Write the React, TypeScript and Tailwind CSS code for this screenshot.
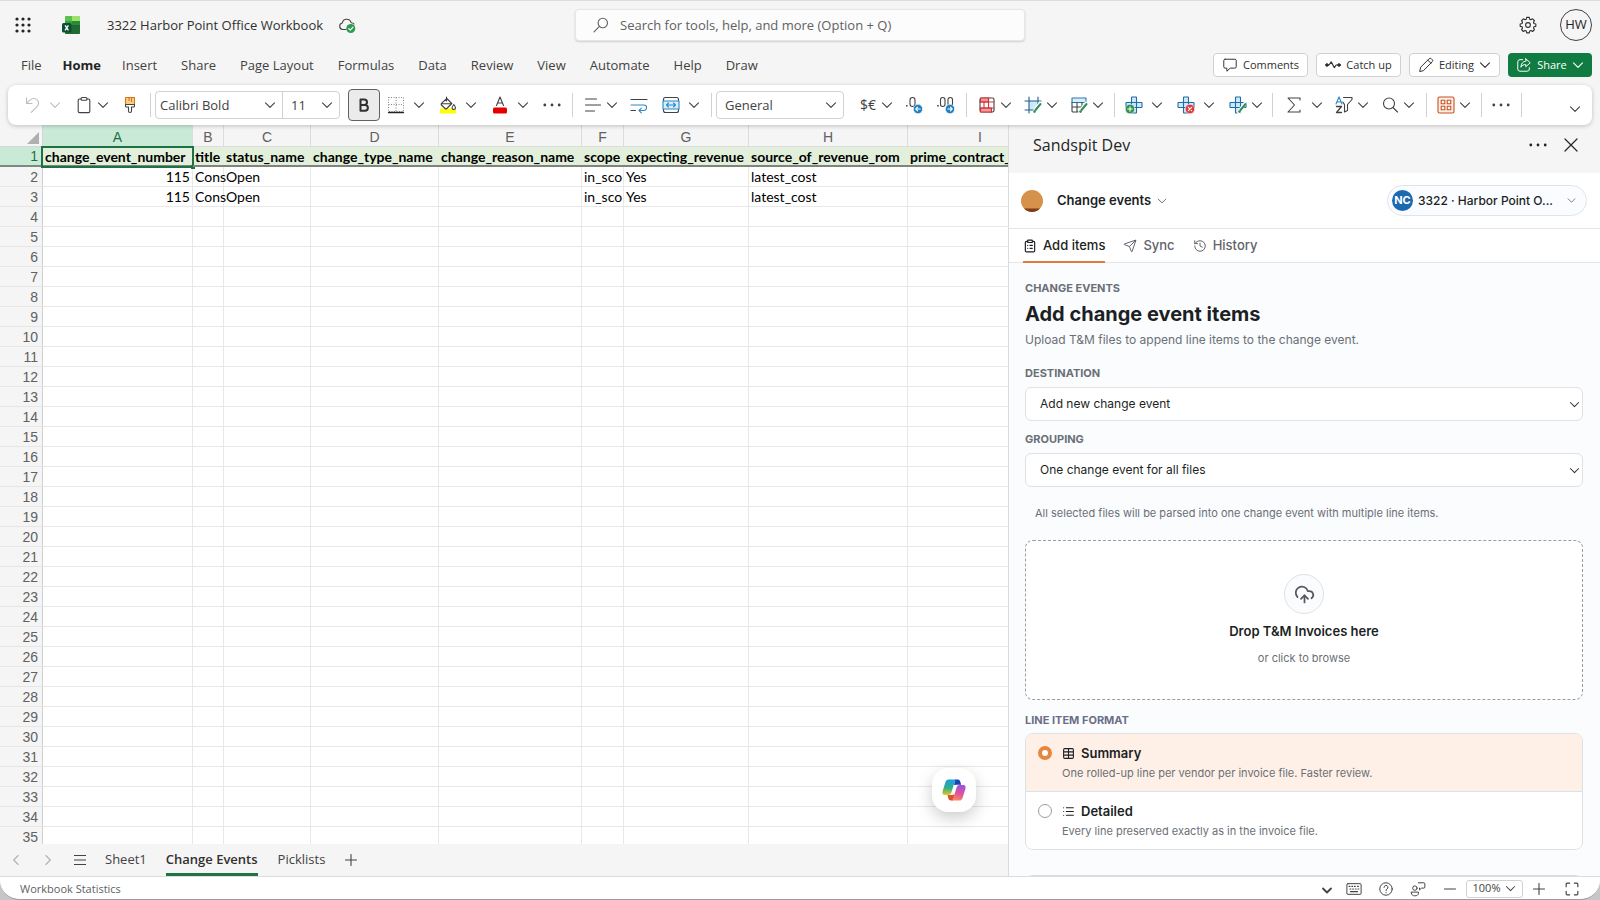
import React from "react";
import { ClipboardList, CloudUpload, History, List, Send, Table } from "lucide-react";

type IconProps = { children: React.ReactNode; className?: string; box?: string };

const Icon = ({ children, className = "size-[18px]", box = "0 0 18 18" }: IconProps) => (
  <svg
    viewBox={box}
    className={`shrink-0 ${className}`}
    fill="none"
    stroke="currentColor"
    strokeWidth="1.1"
    strokeLinecap="round"
    strokeLinejoin="round"
    aria-hidden="true"
  >
    {children}
  </svg>
);

const Chevron = ({ className = "size-3" }: { className?: string }) => (
  <Icon box="0 0 12 12" className={className}>
    <path d="M1.5 3.8 6 8.3l4.5-4.5" />
  </Icon>
);

const Dots = () => (
  <Icon>
    <g fill="currentColor" stroke="none">
      <circle cx="1.8" cy="9" r="1.4" />
      <circle cx="9" cy="9" r="1.4" />
      <circle cx="16.2" cy="9" r="1.4" />
    </g>
  </Icon>
);

const Sep = ({ className = "mx-[11px]" }: { className?: string }) => (
  <span className={`h-6 w-px shrink-0 bg-[#d1d1d1] ${className}`} />
);

type ToolProps = { label: string; children: React.ReactNode; wide?: boolean; className?: string };

const Split = ({ label, children, wide = false, className = "" }: ToolProps) => (
  <button type="button" aria-label={label} className={`flex shrink-0 items-center ${wide ? "gap-2" : "gap-1"} ${className}`}>
    {children}
    <Chevron />
  </button>
);

const Tool = ({ label, children, className = "" }: ToolProps) => (
  <button type="button" aria-label={label} className={`flex shrink-0 items-center ${className}`}>
    {children}
  </button>
);

const CellsPlus = () => (
  <path
    d="M7 1h4a.5.5 0 0 1 .5.5v5h5a.5.5 0 0 1 .5.5v4a.5.5 0 0 1-.5.5h-5v5a.5.5 0 0 1-.5.5H7a.5.5 0 0 1-.5-.5v-5h-5A.5.5 0 0 1 1 11V7a.5.5 0 0 1 .5-.5h5v-5A.5.5 0 0 1 7 1zM6.500 6.500h5v5h-5z"
    stroke="#1c6ca8"
    fill="#cfe9fa"
  />
);

const PencilMark = () => (
  <>
    <path d="m10 16.500 1.300-2.700L16 7.500" stroke="#fff" strokeWidth="3.600" />
    <path d="m11.500 14 5-6" stroke="#2f9150" strokeWidth="2" />
    <circle cx="10.500" cy="15.600" r="1.300" fill="#2f9150" stroke="none" />
  </>
);

function TitleBar() {
  return (
    <header className="grid h-12 shrink-0 grid-cols-[1fr_450px_1fr] items-center text-[13px] text-[#424242]">
      <div className="flex items-center pl-[15px]">
        <button type="button" aria-label="App launcher" className="text-[#242424]">
          <Icon className="size-4" box="0 0 16 16">
            <g fill="currentColor" stroke="none">
              {[2, 8, 14].map((y) => [2, 8, 14].map((x) => <circle key={`${x}-${y}`} cx={x} cy={y} r="1.6" />))}
            </g>
          </Icon>
        </button>
        <svg viewBox="0 0 18 18" className="ml-[31px] size-[18px]" aria-label="Excel">
          <path d="M3 0.800A.8.800 0 0 1 3.800 0H10v5H3z" fill="#5cc04e" />
          <path d="M10 0h7.200a.8.800 0 0 1 .8.800V5h-8z" fill="#9be26a" />
          <path d="M3 5h7v5H3z" fill="#35a345" />
          <path d="M10 5h8v6h-8z" fill="#2c9a3e" />
          <path d="M3 9h15v8.200a.8.800 0 0 1-.8.800H3.800a.8.800 0 0 1-.8-.800z" fill="#1f6a30" />
          <path d="M10 5h8v4h-8z" fill="#2a8a3a" />
          <rect y="7" width="9.500" height="9.500" rx="1.500" fill="#0f4d32" />
          <path d="m3.100 9.300 3.300 5M6.400 9.300l-3.300 5" stroke="#fff" strokeWidth="1.300" />
        </svg>
        <h1 className="ml-[27px] pt-[2px] whitespace-nowrap text-[#303030]">3322 Harbor Point Office Workbook</h1>
        <Icon className="ml-[15px] size-[18px]">
          <path d="M8 13.500H4.600a3.300 3.300 0 0 1-.3-6.500 4.500 4.500 0 0 1 8.800-.3A3.500 3.500 0 0 1 16 8" />
          <circle cx="12.800" cy="12.500" r="4.500" fill="#2f9b50" stroke="none" />
          <path d="m10.800 12.600 1.500 1.500 2.700-2.900" stroke="#fff" strokeWidth="1.200" />
        </Icon>
      </div>
      <div className="flex h-8 items-center rounded-[4px] border border-[#e6e6e6] bg-[#fcfcfc] pl-4 text-[#616161] shadow-[0_1px_2px_rgba(0,0,0,0.16)]">
        <Icon className="size-[18px]">
          <circle cx="10.800" cy="7" r="4.700" />
          <path d="M7.400 10.400 2 15.800" />
        </Icon>
        <input
          type="search"
          aria-label="Search"
          placeholder="Search for tools, help, and more (Option + Q)"
          className="ml-[10px] h-full min-w-0 flex-1 bg-transparent outline-none placeholder:text-[#616161]"
        />
      </div>
      <div className="flex items-center justify-end gap-[23px] pr-2">
        <button type="button" aria-label="Settings" className="text-[#303030]">
          <Icon className="size-[18px]">
            <circle cx="9" cy="9" r="2.400" />
            <path d="M7.700 1.400h2.600l.45 1.900 1.200.5 1.700-1 1.800 1.850-1 1.700.5 1.150 1.900.45v2.400l-1.900.45-.5 1.200 1 1.650-1.800 1.850-1.700-1-1.200.5-.45 1.900H7.700l-.45-1.900-1.200-.5-1.700 1-1.800-1.850 1-1.650-.5-1.200-1.900-.45v-2.400l1.900-.45.5-1.150-1-1.700 1.800-1.850 1.700 1 1.200-.5z" />
          </Icon>
        </button>
        <button
          type="button"
          aria-label="Account HW"
          className="flex size-8 items-center justify-center rounded-full border border-[#424242] text-[13px] text-[#242424]"
        >
          HW
        </button>
      </div>
    </header>
  );
}

const MENU = ["File", "Home", "Insert", "Share", "Page Layout", "Formulas", "Data", "Review", "View", "Automate", "Help", "Draw"];

const actionClass =
  "flex h-6 items-center justify-center gap-[5px] rounded-[4px] border border-[#d1d1d1] bg-white text-[11px] text-[#303030]";

function MenuBar() {
  return (
    <div className="flex h-8 shrink-0 items-center justify-between pr-2 pl-[21px] text-[13px] text-[#424242]">
      <nav className="flex gap-6 pt-[2px]">
        {MENU.map((item) => (
          <button key={item} type="button" className={`whitespace-nowrap ${item === "Home" ? "-mx-1 px-px font-bold text-[#242424]" : ""}`}>
            {item}
          </button>
        ))}
      </nav>
      <div className="flex gap-2">
        <button type="button" className={`${actionClass} w-[95px]`}>
          <Icon className="size-4">
            <path d="M3.500 2.500h11A1.500 1.500 0 0 1 16 4v7a1.500 1.500 0 0 1-1.500 1.500H9.200L5.500 16v-3.500h-2A1.500 1.500 0 0 1 2 11V4a1.500 1.500 0 0 1 1.500-1.500z" />
          </Icon>
          Comments
        </button>
        <button type="button" className={`${actionClass} w-[85px]`}>
          <Icon className="size-4">
            <circle cx="2.200" cy="9" r="1.500" fill="currentColor" />
            <circle cx="15.800" cy="9" r="1.500" fill="currentColor" />
            <path d="M3.500 9h1L7 5.500l3.500 6.500 2-3h2" strokeWidth="1.300" />
          </Icon>
          Catch up
        </button>
        <button type="button" className={`${actionClass} w-[91px]`}>
          <Icon className="size-4">
            <path d="m2 16 1-4.500L12.500 2a1.800 1.800 0 0 1 2.600 0l.8.800a1.800 1.800 0 0 1 0 2.600L6.500 15zM11 3.500 14.500 7" />
          </Icon>
          Editing
          <Chevron />
        </button>
        <button
          type="button"
          className="flex h-6 w-[84px] items-center justify-center gap-[5px] rounded-[4px] bg-[#107c41] text-[11px] text-white"
        >
          <Icon className="size-4">
            <path d="M7.500 3H4.500A2.500 2.500 0 0 0 2 5.500v8A2.500 2.500 0 0 0 4.500 16h8a2.500 2.500 0 0 0 2.500-2.500V12" />
            <path d="m11 2 5 4.500-5 4.500V8.500c-2.500 0-4.300.8-5.500 3C5.800 7.500 7.500 5 11 4.600z" />
          </Icon>
          Share
          <Chevron />
        </button>
      </div>
    </div>
  );
}

type PickerProps = { label: string; value: string; className: string; textClass: string };

const Picker = ({ label, value, className, textClass }: PickerProps) => (
  <span className={`relative flex h-full items-center ${className}`}>
    <select aria-label={label} className={`h-full w-full appearance-none bg-transparent pt-px outline-none ${textClass}`}>
      <option>{value}</option>
    </select>
    <Chevron className="pointer-events-none absolute right-[6px] size-3" />
  </span>
);

function Toolbar() {
  return (
    <div
      role="toolbar"
      aria-label="Home tools"
      className="relative z-10 mx-2 mt-1 flex h-10 shrink-0 items-center rounded-lg bg-white pr-[11px] pl-[15px] text-[13px] text-[#424242] shadow-[0_1px_4px_rgba(0,0,0,0.22)]"
    >
      <Split label="Undo" wide className="text-[#bdbdbd]">
        <Icon>
          <path d="M3.500 2v5.500H9M3.800 7.200l3.400-3.300a4.800 4.800 0 0 1 6.900 0 4.600 4.600 0 0 1 0 6.700L8.200 16.300" />
        </Icon>
      </Split>
      <Split label="Paste" className="ml-3.5">
        <Icon>
          <path d="M6 3H4.500A1.300 1.300 0 0 0 3.200 4.300v11a1.300 1.300 0 0 0 1.300 1.300h9a1.300 1.300 0 0 0 1.300-1.300v-11A1.300 1.300 0 0 0 13.500 3H12" />
          <rect x="6" y="1.500" width="6" height="2.700" rx="1.300" />
        </Icon>
      </Split>
      <Tool label="Format painter" className="ml-3">
        <Icon>
          <path d="M4.500 1.500h9v7h-9z" fill="#f9cf7b" stroke="#d0762c" />
          <path d="M8 1.500v3M10.500 1.500v4" stroke="#d0762c" />
          <path d="M4.500 8.500h9v1.500a1 1 0 0 1-1 1h-2V15a1.500 1.500 0 0 1-3 0v-4h-2a1 1 0 0 1-1-1z" />
        </Icon>
      </Tool>
      <Sep className="mr-1 ml-[11px]" />
      <div className="flex h-7 w-[185px] shrink-0 items-center rounded-[4px] border border-[#d1d1d1]">
        <Picker label="Font" value="Calibri Bold" className="w-[127px] border-r border-[#d1d1d1]" textClass="pl-1" />
        <Picker label="Font size" value="11" className="flex-1" textClass="pl-2" />
      </div>
      <button
        type="button"
        aria-label="Bold"
        aria-pressed="true"
        className="ml-2 flex size-8 shrink-0 items-center justify-center rounded-[4px] border border-[#616161] bg-[#ebebeb] text-[#303030]"
      >
        <Icon>
          <path d="M5.500 3.500h3.800a2.700 2.700 0 0 1 0 5.400H5.500zM5.500 8.900H10a2.900 2.900 0 0 1 0 5.800H5.500z" strokeWidth="2" />
        </Icon>
      </button>
      <Split label="Borders" wide className="ml-[7px]">
        <Icon>
          <path d="M1.500 1.500h15v14h-15zM9 1.500v14M1.500 8.500h15" stroke="#8a8a8a" strokeDasharray="1 1.500" strokeLinecap="butt" />
          <path d="M1.500 16.500h15" stroke="#242424" strokeWidth="1.300" />
        </Icon>
      </Split>
      <Split label="Fill color" wide className="ml-3.5">
        <Icon>
          <rect x="1" y="12.500" width="16" height="5" rx="1" fill="#ffff00" stroke="none" />
          <path d="M7.500 1v4M7.800 2.500l5 5-5 5a1.200 1.200 0 0 1-1.700 0L2.500 9a1.200 1.200 0 0 1 0-1.700zM2.200 7.800h10.200" fill="#fff" />
          <path d="M14.800 8.500c1 1.500 1.700 2.300 1.700 3.300a1.700 1.700 0 0 1-3.400 0c0-1 .7-1.800 1.700-3.300z" fill="#fff" />
        </Icon>
      </Split>
      <Split label="Font color" wide className="ml-3.5">
        <Icon>
          <path d="M5.500 9.500 9 1l3.500 8.500M6.600 7h4.800" />
          <rect x="2" y="11.500" width="14" height="6" rx="1.500" fill="#e60000" stroke="none" />
        </Icon>
      </Split>
      <Tool label="More font options" className="ml-3.5">
        <Dots />
      </Tool>
      <Sep />
      <Split label="Align">
        <Icon>
          <path d="M1.500 3h11M1.500 9h15M1.500 15h9" />
        </Icon>
      </Split>
      <Tool label="Wrap text" className="ml-3">
        <Icon>
          <path d="M1 3.500h16M1 14.500h4.500" />
          <path d="M1 9h12.800a2.700 2.700 0 0 1 0 5.500H9M11.300 12.200 9 14.500l2.300 2.300" stroke="#2b88c8" />
        </Icon>
      </Tool>
      <Split label="Merge and center" wide className="ml-3.5">
        <Icon>
          <rect x="1.500" y="1.500" width="15" height="15" rx="2" />
          <path d="M1 5h16v8H1z" fill="#d8eefb" stroke="#2b88c8" />
          <path d="M4.500 9h9M6.500 7 4.500 9l2 2M11.500 7l2 2-2 2" stroke="#2b88c8" />
        </Icon>
      </Split>
      <Sep className="mr-1 ml-[11px]" />
      <div className="flex h-7 w-32 shrink-0 items-center rounded-[4px] border border-[#d1d1d1]">
        <Picker label="Number format" value="General" className="flex-1" textClass="pl-2" />
      </div>
      <Split label="Currency" className="ml-[15px]">
        <span className="w-[18px] text-center text-[14px] leading-[18px]">$€</span>
      </Split>
      <Tool label="Increase decimal" className="ml-3">
        <Icon>
          <rect x="5" y="1.500" width="5" height="9" rx="2.500" />
          <circle cx="1.800" cy="9.800" r="0.900" fill="currentColor" stroke="none" />
          <circle cx="13" cy="13" r="4.700" fill="#1f7fbf" stroke="#fff" strokeWidth="0.600" />
          <path d="M15.200 13h-4.400M12.600 11.200 10.800 13l1.800 1.800" stroke="#fff" />
        </Icon>
      </Tool>
      <Tool label="Decrease decimal" className="ml-3.5">
        <Icon>
          <rect x="3.500" y="1.500" width="4.500" height="9" rx="2.200" />
          <rect x="11" y="1.500" width="4.500" height="9" rx="2.200" />
          <circle cx="1" cy="9.800" r="0.900" fill="currentColor" stroke="none" />
          <circle cx="13" cy="13" r="4.700" fill="#1f7fbf" stroke="#fff" strokeWidth="0.600" />
          <path d="M10.800 13h4.400M13.400 11.200l1.800 1.800-1.800 1.800" stroke="#fff" />
        </Icon>
      </Tool>
      <Sep />
      <Split label="Conditional formatting">
        <Icon>
          <rect x="2" y="2" width="14" height="14" rx="1.500" fill="#fff" />
          <path d="M2.500 2h8v4h-8zM2.500 12h11v4h-11z" fill="#f59a9a" stroke="#d13438" />
          <path d="M2 6h14M2 12h14M10.500 2v4M13.500 12v4M6 6v6M10.500 6v6" stroke="#d13438" />
        </Icon>
      </Split>
      <Split label="Cell styles" className="ml-3">
        <Icon>
          <path d="M5 5h9v9H5z" fill="#cfe9fa" stroke="none" />
          <path d="M5 1v16M14 1v9M1 5h16M1 14h9" stroke="#1f5f8f" />
          <PencilMark />
        </Icon>
      </Split>
      <Split label="Format as table" className="ml-3">
        <Icon>
          <path d="M2 2h14v4.500H2z" fill="#d8eefb" stroke="#2b78b0" />
          <path d="M2 6.500V15a1 1 0 0 0 1 1h7M16 6.500V9M2 11h10M7 6.500V16M12 6.500V11" />
          <PencilMark />
        </Icon>
      </Split>
      <Sep className="mx-[10px]" />
      <Split label="Insert cells" wide>
        <Icon>
          <CellsPlus />
          <circle cx="5" cy="13" r="4.800" fill="#2f9150" stroke="#fff" strokeWidth="0.600" />
          <path d="M5 10.700v4.600M2.700 13h4.600" stroke="#fff" />
        </Icon>
      </Split>
      <Split label="Delete cells" wide className="ml-3.5">
        <Icon>
          <CellsPlus />
          <circle cx="13" cy="13" r="4.800" fill="#dc3a3c" stroke="#fff" strokeWidth="0.600" />
          <path d="m11.300 11.300 3.400 3.400M14.700 11.300l-3.400 3.400" stroke="#fff" />
        </Icon>
      </Split>
      <Split label="Format cells" className="ml-3.5">
        <Icon>
          <CellsPlus />
          <PencilMark />
        </Icon>
      </Split>
      <Sep className="mr-3 ml-[9px]" />
      <Split label="AutoSum" wide>
        <Icon>
          <path d="M15 4V2H3l6.500 7L3 16h12v-2" />
        </Icon>
      </Split>
      <Split label="Sort and filter" className="ml-3">
        <Icon>
          <path d="M1 8 4 1l3 7M2 6h4" stroke="#2b88c8" />
          <path d="M1.500 10.500h5L1.500 16.500h5" strokeWidth="1.300" />
          <path d="M8.500 1.500H17v2l-4.500 5v6L9.500 16V8.500L7.800 6" />
        </Icon>
      </Split>
      <Split label="Find" className="ml-3">
        <Icon>
          <circle cx="8" cy="7.500" r="5.500" />
          <path d="m12 11.500 4.500 4.500" />
        </Icon>
      </Split>
      <Sep className="mr-[10px] ml-[11px]" />
      <Split label="Add-ins">
        <Icon>
          <rect x="1" y="1" width="16" height="16" rx="1.500" stroke="#c8501e" fill="#fdeee6" />
          <path d="M4.200 4.200h3.600v3.600H4.200zM10.200 4.200h3.600v3.600h-3.600zM4.200 10.200h3.600v3.600H4.200zM10.200 10.200h3.600v3.600h-3.600z" stroke="#c8501e" fill="#fff" />
        </Icon>
      </Split>
      <Sep className="mx-[10px]" />
      <Tool label="More options">
        <Dots />
      </Tool>
      <Sep />
      <Tool label="Ribbon display options" className="mt-2 ml-auto">
        <Chevron />
      </Tool>
    </div>
  );
}

const COLUMNS = [
  { id: "A", width: "w-[150px]", title: "change_event_number" },
  { id: "B", width: "w-[31px]", title: "title" },
  { id: "C", width: "w-[87px]", title: "status_name" },
  { id: "D", width: "w-32", title: "change_type_name" },
  { id: "E", width: "w-[143px]", title: "change_reason_name" },
  { id: "F", width: "w-[42px]", title: "scope" },
  { id: "G", width: "w-[125px]", title: "expecting_revenue" },
  { id: "H", width: "w-[159px]", title: "source_of_revenue_rom" },
  { id: "I", width: "w-[145px]", title: "prime_contract_" },
];

const RECORD: Record<string, string> = { A: "115", B: "Cons", C: "Open", F: "in_sco", G: "Yes", H: "latest_cost" };
const ROWS = Array.from({ length: 34 }, (_, i) => i + 2);

function Sheet() {
  return (
    <div className="relative min-h-0 flex-1 overflow-hidden bg-white">
      <table className="w-[1053px] table-fixed border-separate border-spacing-0 font-['Lato',sans-serif] text-[14px] leading-[18px] text-black">
        <colgroup>
          <col className="w-[43px]" />
          {COLUMNS.map((c) => (
            <col key={c.id} className={c.width} />
          ))}
        </colgroup>
        <thead className="font-['Liberation_Sans',sans-serif] text-[#616161]">
          <tr className="h-[22px] bg-[#f5f5f5]">
            <th className="border-r border-b border-[#d6d6d6] p-0" aria-label="Select all">
              <svg viewBox="0 0 12 12" className="mt-[5px] mr-[3px] ml-auto size-3" aria-hidden="true">
                <path d="M12 0v12H0z" fill="#b0b0b0" />
              </svg>
            </th>
            {COLUMNS.map((c) => (
              <th
                key={c.id}
                scope="col"
                className={`border-r border-b border-[#dcdcdc] p-0 pt-[2px] font-normal ${c.id === "A" ? "bg-[#caead8] text-[#1e7145]" : ""}`}
              >
                {c.id}
              </th>
            ))}
          </tr>
        </thead>
        <tbody>
          <tr className="h-5 bg-[#e2efda] text-left leading-[17px]">
            <th
              scope="row"
              className="border-r-2 border-b-2 border-r-[#1e7145] border-b-[#7d8a82] bg-[#caead8] p-0 pt-px pr-[3px] text-right font-['Liberation_Sans',sans-serif] font-normal text-[#1e7145]"
            >
              1
            </th>
            {COLUMNS.map((c) => (
              <th key={c.id} className="relative border-b-2 border-[#7f857c] p-0 pt-px font-bold whitespace-nowrap">
                <span className="block pl-[2px]">{c.title}</span>
                {c.id === "A" && (
                  <span className="pointer-events-none absolute -top-px -right-px -bottom-[3px] -left-[2px] border-2 border-[#1e7145]">
                    <span className="absolute -right-[3px] -bottom-[3px] size-1 bg-[#1e7145]" />
                  </span>
                )}
              </th>
            ))}
          </tr>
          {ROWS.map((row) => (
            <tr key={row} className="h-5">
              <th
                scope="row"
                className="border-r border-b border-r-[#cfcfcf] border-b-[#e6e6e6] bg-[#f5f5f5] p-0 pr-1 text-right font-['Liberation_Sans',sans-serif] font-normal text-[#616161]"
              >
                {row}
              </th>
              {COLUMNS.map((c) => (
                <td
                  key={c.id}
                  className={`border-r border-b border-[#e8e8e8] p-0 whitespace-nowrap ${c.id === "A" ? "pr-[2px] text-right" : "pl-[2px]"}`}
                >
                  {row < 4 ? RECORD[c.id] : ""}
                </td>
              ))}
            </tr>
          ))}
        </tbody>
      </table>
      <button
        type="button"
        aria-label="Copilot"
        className="absolute right-8 bottom-8 flex size-11 items-center justify-center rounded-2xl bg-white shadow-[0_6px_16px_rgba(0,0,0,0.2)]"
      >
        <svg viewBox="0 0 24 22" className="h-[22px] w-6" aria-hidden="true">
          <defs>
            <linearGradient id="cpLeft" x1="0" y1="0" x2="0" y2="1">
              <stop offset="0" stopColor="#1b9de2" />
              <stop offset="0.550" stopColor="#2fb08c" />
              <stop offset="1" stopColor="#e8c81e" />
            </linearGradient>
            <linearGradient id="cpRight" x1="0.600" y1="0" x2="0.300" y2="1">
              <stop offset="0" stopColor="#a04fe0" />
              <stop offset="0.550" stopColor="#e0559a" />
              <stop offset="1" stopColor="#ff8a5c" />
            </linearGradient>
          </defs>
          <path d="M13 0.500h2.800c1.500 0 2 .8 2.400 2l1 3.200H15l-3 .3z" fill="#1745b8" />
          <path d="M11 21.500H8.800c-1.500 0-2-.8-2.400-2L5.500 16H10l3-.500z" fill="#d9532c" />
          <path d="M6.800.5h7.700c-1.300.4-1.700 1.500-2.100 2.900L9.600 13c-.5 1.900-1.300 3-3.300 3H3C.6 16 0 14.400.6 12.200L3.300 3.600C3.900 1.600 4.800.5 6.800.5z" fill="url(#cpLeft)" />
          <path d="M17.200 21.500H9.500c1.300-.4 1.700-1.500 2.100-2.900L14.400 9c.5-1.900 1.300-3 3.300-3H21c2.400 0 3 1.600 2.400 3.800l-2.700 8.600c-.6 2-1.500 3.100-3.500 3.100z" fill="url(#cpRight)" />
        </svg>
      </button>
    </div>
  );
}

function SheetTabs() {
  return (
    <div className="flex h-8 shrink-0 items-stretch bg-[#f5f5f5] text-[13px] text-[#424242]">
      <button type="button" aria-label="Previous sheet" className="ml-[10px] text-[#b0b0b0]">
        <Chevron className="size-3 rotate-90" />
      </button>
      <button type="button" aria-label="Next sheet" className="ml-5 text-[#b0b0b0]">
        <Chevron className="size-3 -rotate-90" />
      </button>
      <button type="button" aria-label="All sheets" className="ml-5">
        <Icon box="0 0 12 12" className="size-3">
          <path d="M0 1.500h12M0 6h12M0 10.500h12" />
        </Icon>
      </button>
      <button type="button" className="ml-[19px]">Sheet1</button>
      <button type="button" className="ml-[19px] border-b-[3px] border-[#217346] pt-[3px] font-semibold text-[#303030]">
        Change Events
      </button>
      <button type="button" className="ml-5">Picklists</button>
      <button type="button" aria-label="New sheet" className="ml-5">
        <Icon box="0 0 12 12" className="size-3">
          <path d="M6 0.500v11M0.500 6h11" />
        </Icon>
      </button>
    </div>
  );
}

type FieldProps = { id: string; label: string; value: string };

const Field = ({ id, label, value }: FieldProps) => (
  <div className="flex flex-col gap-[6px]">
    <label htmlFor={id} className="text-[11px] leading-4 font-bold text-[#6b6f76]">
      {label}
    </label>
    <div className="relative flex items-center">
      <select
        id={id}
        className="h-[34px] w-full appearance-none rounded-md border border-[#dfe1e5] bg-white pl-[14px] text-[12px] text-[#1c1f23]"
      >
        <option>{value}</option>
      </select>
      <Chevron className="pointer-events-none absolute right-[3px] size-[11px] text-[#303030]" />
    </div>
  </div>
);

const FORMATS = [
  {
    id: "summary",
    title: "Summary",
    text: "One rolled-up line per vendor per invoice file. Faster review.",
    icon: <Table className="size-[13px]" strokeWidth={2} />,
    tint: "border-b border-[#dfe1e5] bg-[#fef0e6]",
  },
  {
    id: "detailed",
    title: "Detailed",
    text: "Every line preserved exactly as in the invoice file.",
    icon: <List className="size-[13px]" strokeWidth={2} />,
    tint: "bg-white",
  },
];

function Pane() {
  return (
    <aside className="flex w-[37%] min-w-0 shrink-0 flex-col border-l border-[#d9dcdf] bg-white font-['Inter',sans-serif] text-[13px] text-[#1c1f23]">
      <div className="flex h-12 shrink-0 items-center justify-between bg-[#f5f5f5] pr-5 pb-2 pl-6 font-['Open_Sans',sans-serif] text-[#242424]">
        <h2 className="text-[16px] leading-6">Sandspit Dev</h2>
        <div className="flex items-center gap-[15px]">
          <button type="button" aria-label="Pane options">
            <Dots />
          </button>
          <button type="button" aria-label="Close pane">
            <Icon className="size-[18px]">
              <path d="m3 3 12 12M15 3 3 15" strokeWidth="1.200" />
            </Icon>
          </button>
        </div>
      </div>
      <div className="flex h-14 shrink-0 items-center border-b border-[#e3e5e8] pr-[13px] pl-3">
        <svg viewBox="0 0 22 22" className="size-[22px]" aria-hidden="true">
          <circle cx="11" cy="11" r="11" fill="#d6924a" />
          <path d="M3 18.500h16a11 11 0 0 1-16 0z" fill="#7d3f18" />
        </svg>
        <button type="button" className="ml-[14px] flex items-center gap-[6px] font-semibold">
          Change events
          <Chevron className="size-[10px] text-[#5c6068]" />
        </button>
        <button
          type="button"
          className="ml-auto flex h-[31px] w-[200px] items-center rounded-full border border-[#dfe4ea] bg-[#fafcff] pr-[10px] pl-1 text-[12px] font-medium"
        >
          <span className="flex size-[21px] items-center justify-center rounded-full bg-[#1b69b0] text-[11px] font-bold text-white">
            NC
          </span>
          <span className="ml-[5px]">3322 · Harbor Point O...</span>
          <Chevron className="ml-auto size-[9px] text-[#5c6068]" />
        </button>
      </div>
      <div role="tablist" className="flex h-[34px] shrink-0 gap-[18px] border-b border-[#e3e5e8] pl-[14px] font-medium text-[#5f636b]">
        <button type="button" role="tab" aria-selected="true" className="-mb-px flex items-center gap-[6px] border-b-2 border-[#e07b3c] pt-[2px] text-[#1c1f23]">
          <ClipboardList className="size-[14px]" strokeWidth={2} />
          Add items
        </button>
        <button type="button" role="tab" aria-selected="false" className="flex items-center gap-[6px] pt-px">
          <Send className="size-[14px]" strokeWidth={1.7} />
          Sync
        </button>
        <button type="button" role="tab" aria-selected="false" className="flex items-center gap-[6px] pt-px">
          <History className="size-[14px]" strokeWidth={1.7} />
          History
        </button>
      </div>
      <div className="min-h-0 flex-1 overflow-hidden bg-[#fafcfe] pt-[17px] pr-[17px] pl-4">
        <p className="text-[11px] leading-4 font-bold text-[#6b6f76]">CHANGE EVENTS</p>
        <h3 className="mt-1 text-[20px] leading-7 font-bold">Add change event items</h3>
        <p className="mt-1 mb-[17px] text-[12px] leading-4 text-[#6b6f76]">Upload T&amp;M files to append line items to the change event.</p>
        <div className="flex flex-col gap-[10px]">
          <Field id="destination" label="DESTINATION" value="Add new change event" />
          <Field id="grouping" label="GROUPING" value="One change event for all files" />
        </div>
        <p className="mt-[18px] ml-[10px] text-[11px] leading-4 text-[#6b6f76]">
          All selected files will be parsed into one change event with multiple line items.
        </p>
        <button
          type="button"
          className="mt-[19px] flex h-40 w-full flex-col items-center justify-center rounded-lg border border-dashed border-[#9a9da3] bg-white"
        >
          <span className="flex size-10 items-center justify-center rounded-full border border-[#dfe1e5] bg-[#fafcfe] text-[#55585e]">
            <CloudUpload className="size-[21px]" strokeWidth={2} />
          </span>
          <span className="mt-[7px] leading-5 font-semibold">Drop T&amp;M Invoices here</span>
          <span className="mt-[9px] text-[11px] leading-4 text-[#6b6f76]">or click to browse</span>
        </button>
        <fieldset>
          <legend className="pt-3 pb-[5px] text-[11px] leading-4 font-bold text-[#6b6f86]">LINE ITEM FORMAT</legend>
          <div className="overflow-hidden rounded-lg border border-[#dfe1e5]">
            {FORMATS.map((f) => (
              <label key={f.id} className={`flex gap-[10px] px-3 pt-[10px] pb-[9px] ${f.tint}`}>
                <input
                  type="radio"
                  name="line-format"
                  defaultChecked={f.id === "summary"}
                  className="mt-[2px] size-[14px] shrink-0 appearance-none rounded-full border border-[#9a9da3] bg-white checked:border-4 checked:border-[#e5873f]"
                />
                <span className="flex flex-col">
                  <span className="flex items-center gap-[6px] leading-[18px] font-semibold">
                    {f.icon}
                    {f.title}
                  </span>
                  <span className="mt-[2px] text-[11px] leading-[18px] text-[#6b6f76]">{f.text}</span>
                </span>
              </label>
            ))}
          </div>
        </fieldset>
        <div className="mt-[25px] h-10 rounded-lg border border-[#d8dfd8] bg-white" />
      </div>
    </aside>
  );
}

function StatusBar() {
  return (
    <footer className="flex h-[23px] shrink-0 items-center justify-between border-t border-[#dcdcdc] bg-white pr-[21px] pl-5 text-[11px] text-[#616161]">
      <span className="pt-[3px]">Workbook Statistics</span>
      <div className="flex items-center pt-px text-[#424242]">
        <button type="button" aria-label="More status options">
          <Icon box="0 0 12 12" className="mt-1 size-3">
            <path d="M2 3.500 6 7.500l4-4" strokeWidth="1.800" />
          </Icon>
        </button>
        <button type="button" aria-label="Keyboard" className="ml-[13px]">
          <Icon className="size-4">
            <rect x="1" y="3" width="16" height="12" rx="1.200" />
            <path d="M3.500 6h1M6.500 6h1M9.500 6h1M13 6h1M4.500 9h1M7.500 9h1M10.500 9h1M13.500 9h1M5 12h8" strokeWidth="1.300" />
          </Icon>
        </button>
        <button type="button" aria-label="Help" className="ml-4">
          <Icon className="size-4">
            <circle cx="9" cy="9" r="7" />
            <path d="M6.800 7.200a2.200 2.200 0 1 1 3.300 1.900c-.8.500-1.100.9-1.100 1.700" />
            <circle cx="9" cy="13" r="0.700" fill="currentColor" stroke="none" />
          </Icon>
        </button>
        <button type="button" aria-label="Feedback" className="ml-4">
          <Icon className="size-4">
            <circle cx="5.500" cy="8" r="2.500" />
            <path d="M1.500 12.500h8v1.300c0 1.800-1.700 2.900-4 2.900s-4-1.100-4-2.900zM9.500 2h6a1.200 1.200 0 0 1 1.200 1.200v3.600A1.200 1.200 0 0 1 15.500 8H13l-2.300 2V8" />
          </Icon>
        </button>
        <button type="button" aria-label="Zoom out" className="ml-[18px]">
          <Icon box="0 0 12 12" className="size-3">
            <path d="M0.500 6h11" />
          </Icon>
        </button>
        <button type="button" className="ml-[10px] flex h-[18px] w-[57px] items-center justify-center gap-[5px] rounded-[3px] border border-[#d1d1d1]">
          100%
          <Chevron className="size-[11px]" />
        </button>
        <button type="button" aria-label="Zoom in" className="ml-[10px]">
          <Icon box="0 0 12 12" className="size-3">
            <path d="M6 0.500v11M0.500 6h11" />
          </Icon>
        </button>
        <button type="button" aria-label="Fit to window" className="ml-5">
          <Icon className="size-[14px]">
            <path d="M1.500 6V3a1.500 1.500 0 0 1 1.500-1.500h3M12 1.500h3A1.500 1.500 0 0 1 16.500 3v3M16.500 12v3a1.500 1.500 0 0 1-1.500 1.500h-3M6 16.500H3A1.500 1.500 0 0 1 1.500 15v-3" strokeWidth="1.500" />
          </Icon>
        </button>
      </div>
    </footer>
  );
}

export default function App() {
  return (
    <div className="h-screen bg-[#c6c6c6] font-['Open_Sans',sans-serif]">
      <div className="flex h-full flex-col overflow-hidden rounded-b-[20px] border-t border-b border-t-[#dcdcdc] border-b-[#9c9c9c] bg-[#f5f5f5]">
        <TitleBar />
        <MenuBar />
        <Toolbar />
        <main className="flex min-h-0 flex-1">
          <div className="flex min-w-0 flex-1 flex-col">
            <Sheet />
            <SheetTabs />
          </div>
          <Pane />
        </main>
        <StatusBar />
      </div>
    </div>
  );
}
